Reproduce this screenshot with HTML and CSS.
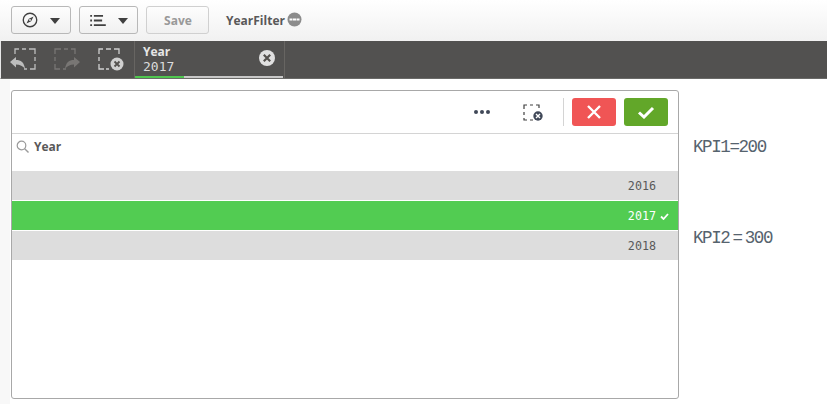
FILE: index.html
```html
<!DOCTYPE html>
<html lang="en">

<head>
    <meta charset="UTF-8">
    <title>YearFilter</title>
    <link rel="stylesheet" href="styles.css">
</head>

<body>
    <header class="toolbar">
        <button class="toolBttn navBttn">
            <svg width="16" height="16" viewBox="0 0 18 18">
                <circle cx="9" cy="9" r="7.6" fill="none" stroke="#404040" stroke-width="1.5" />
                <path d="M13 5 L10.3 10.3 L5 13 L7.7 7.7 Z M9 8 A1 1 0 1 0 9 10 A1 1 0 1 0 9 8 Z" fill="#404040" fill-rule="evenodd" />
            </svg>
            <span class="caret"></span>
        </button>
        <button class="toolBttn listBttn">
            <svg width="16" height="11" viewBox="0 0 17 12">
                <path d="M0 0h2v2H0z M0 5h2v2H0z M0 10h2v2H0z M4 0h10v2H4z M4 5h9v2H4z M4 10h13v2H4z" fill="#404040" />
            </svg>
            <span class="caret"></span>
        </button>
        <button class="toolBttn saveBttn">Save</button>
        <span class="sheetName">YearFilter</span>
        <svg class="sheetBadge" width="15" height="15" viewBox="0 0 15 15">
            <circle cx="7.5" cy="7.5" r="7" fill="#8c8c8c" />
            <path d="M2.5 6.5h3v2h-3z M6 6.5h3v2H6z M9.5 6.5h3v2h-3z" fill="#fff" />
        </svg>
    </header>

    <nav class="selectionBar">
        <div class="selTools">
            <svg class="selIcon" width="26" height="24" viewBox="0 0 26 24">
                <path d="M5 7V2h4 M12 2h4 M19 2h6v5 M25 10v4 M25 17v5h-5 M17 22h-3" fill="none" stroke="#bdbdbd" stroke-width="1.300" />
                <path d="M0 15 L6 10 V13 C11 13 14 15 15 22 C13 19 10 17.500 6 17.500 V20.500 Z" fill="#bdbdbd" />
            </svg>
            <svg class="selIcon" width="26" height="24" viewBox="0 0 26 24">
                <path d="M21 7V2h-4 M14 2h-4 M7 2H1v5 M1 10v4 M1 17v5h5 M9 22h3" fill="none" stroke="#787674" stroke-width="1.300" />
                <path d="M26 15 L20 10 V13 C15 13 12 15 11 22 C13 19 16 17.500 20 17.500 V20.500 Z" fill="#787674" />
            </svg>
            <svg class="selIcon" width="26" height="24" viewBox="0 0 26 24">
                <path d="M1 7V2h4 M8 2h5 M16 2h5v5 M1 10v4 M1 17v5h5 M8 22h3" fill="none" stroke="#d0d0d0" stroke-width="1.300" />
                <circle cx="19" cy="17" r="6.500" fill="#d0d0d0" />
                <path d="M16.500 14.500 L21.500 19.500 M21.500 14.500 L16.500 19.500" stroke="#54514e" stroke-width="1.800" />
            </svg>
        </div>
        <div class="selItem">
            <div class="selText">
                <span class="selField">Year</span>
                <span class="selValue">2017</span>
            </div>
            <svg class="selClear" width="16" height="16" viewBox="0 0 16 16">
                <circle cx="8" cy="8" r="8" fill="#e0e0e0" />
                <path d="M4.800 4.800 L11.200 11.200 M11.200 4.800 L4.800 11.200" stroke="#54514e" stroke-width="2.200" />
            </svg>
            <div class="selProgress"><span class="selProgressFill"></span></div>
        </div>
    </nav>

    <main class="content">
        <section class="listbox">
            <div class="listboxHead">
                <span class="dots"><i></i><i></i><i></i></span>
                <svg class="clearIcon" width="21" height="17" viewBox="0 0 21 17">
                    <path d="M1 5V1h3 M7 1h3 M13 1h3v3 M1 8v3 M1 14v2h3 M7 16h3" fill="none" stroke="#404040" stroke-width="1.200" />
                    <circle cx="15" cy="12" r="4.700" fill="#404858" />
                    <path d="M13 10 L17 14 M17 10 L13 14" stroke="#fff" stroke-width="1.400" />
                </svg>
                <span class="headDivider"></span>
                <button class="actionBttn cancelBttn">
                    <svg width="16" height="16" viewBox="0 0 16 16">
                        <path d="M2 2 L14 14 M14 2 L2 14" stroke="#fff" stroke-width="2.400" />
                    </svg>
                </button>
                <button class="actionBttn confirmBttn">
                    <svg width="18" height="14" viewBox="0 0 18 14">
                        <path d="M2 7.500 L7 12 L16 3" fill="none" stroke="#fff" stroke-width="3" />
                    </svg>
                </button>
            </div>
            <div class="listboxSearch">
                <svg width="13" height="13" viewBox="0 0 13 13">
                    <circle cx="5.500" cy="5.500" r="4.300" fill="none" stroke="#9a9a9a" stroke-width="1.200" />
                    <path d="M8.700 8.700 L12.500 12.500" stroke="#9a9a9a" stroke-width="1.400" />
                </svg>
                <span class="searchLabel">Year</span>
            </div>
            <ul class="yearList">
                <li class="yearRow">2016</li>
                <li class="yearRow picked">2017
                    <svg class="pickedTick" width="9" height="7" viewBox="0 0 9 7">
                        <path d="M1 3.500 L3.500 6 L8 1" fill="none" stroke="#fff" stroke-width="1.800" />
                    </svg>
                </li>
                <li class="yearRow">2018</li>
            </ul>
        </section>
        <aside class="kpis">
            <p class="kpi kpiOne">KPI1=200</p>
            <p class="kpi kpiTwo">KPI2 = 300</p>
        </aside>
    </main>
</body>

</html>
```

FILE: styles.css
```css
* {
    box-sizing: border-box;
}

body {
    margin: 0;
    height: 404px;
    overflow: hidden;
    background-color: #fff;
    font-family: "Open Sans", "Liberation Sans", sans-serif;
}

.toolbar {
    display: flex;
    align-items: center;
    height: 41px;
    padding: 0 0 1px 11px;
    background: linear-gradient(#fff, #f1f1f1);
}

.toolBttn {
    display: flex;
    align-items: center;
    height: 28px;
    padding: 0;
    background: linear-gradient(#fdfdfd, #f0f0f0);
    border: 1px solid #b8b8b8;
    border-radius: 3px;
}

.navBttn {
    width: 60px;
    padding-left: 10px;
    gap: 12px;
}

.listBttn {
    width: 59px;
    margin-left: 8px;
    padding-left: 10px;
    gap: 12px;
}

.caret {
    width: 0;
    height: 0;
    border-left: 5px solid transparent;
    border-right: 5px solid transparent;
    border-top: 6px solid #404040;
    margin-top: 2px;
}

.saveBttn {
    justify-content: center;
    width: 63px;
    margin-left: 8px;
    padding-left: 1px;
    font-family: "Open Sans", sans-serif;
    font-size: 12px;
    font-weight: 700;
    color: #999;
    border-color: #d0d0d0;
}

.sheetName {
    margin-left: 17px;
    font-size: 12px;
    font-weight: 700;
    color: #595959;
}

.sheetBadge {
    margin-left: 2px;
    margin-bottom: 2px;
}

.selectionBar {
    display: flex;
    height: 38px;
    background-color: #525150;
    border-left: 1px solid #e8e8e8;
    border-bottom: 1px solid #6a6a68;
}

.selTools {
    display: flex;
    width: 134px;
    padding: 6px 0 0 9px;
    gap: 18px;
    border-right: 1px solid #676562;
}

.selIcon {
    flex: none;
}

.selItem {
    position: relative;
    display: flex;
    justify-content: space-between;
    width: 150px;
    padding: 3px 9px 0 8px;
    border-right: 1px solid #676562;
}

.selText {
    display: flex;
    flex-direction: column;
    color: #e6e6e6;
}

.selField {
    font-size: 12px;
    font-weight: 700;
    line-height: 15px;
}

.selValue {
    font-family: "DejaVu Sans Mono", monospace;
    font-size: 13px;
    line-height: 15px;
    color: #dcdcdc;
}

.selClear {
    margin-top: 6px;
}

.selProgress {
    position: absolute;
    left: 0;
    right: 1px;
    bottom: 0;
    height: 2px;
    background-color: #c8c8c8;
}

.selProgressFill {
    display: block;
    width: 49px;
    height: 2px;
    background-color: #4fc74f;
}

.content {
    display: flex;
    align-items: flex-start;
    height: 325px;
    padding: 11px 0 0 11px;
    background: linear-gradient(90deg, #f8f8f8 10px, #fff 10px);
}

.listbox {
    width: 668px;
    height: 309px;
    background-color: #fff;
    border: 1px solid #a8a8a8;
    border-radius: 3px;
}

.listboxHead {
    display: flex;
    align-items: center;
    height: 43px;
    border-bottom: 1px solid #d4d4d4;
    padding: 0 10px 0 0;
    justify-content: flex-end;
}

.dots {
    display: flex;
    gap: 2px;
    margin-right: 33px;
}

.dots i {
    width: 4px;
    height: 4px;
    background-color: #404858;
    border-radius: 50%;
}

.clearIcon {
    margin-right: 19px;
}

.headDivider {
    width: 1px;
    height: 28px;
    margin-right: 8px;
    background-color: #d4d4d4;
}

.actionBttn {
    display: flex;
    align-items: center;
    justify-content: center;
    width: 44px;
    height: 28px;
    padding: 0;
    border: 0;
    border-radius: 3px;
}

.cancelBttn {
    background-color: #f05555;
    margin-right: 8px;
}

.confirmBttn {
    background-color: #62a729;
}

.listboxSearch {
    display: flex;
    align-items: center;
    gap: 5px;
    height: 37px;
    padding: 0 0 12px 4px;
}

.searchLabel {
    font-size: 12px;
    font-weight: 700;
    color: #595959;
}

.yearList {
    margin: 0;
    padding: 0;
    list-style: none;
}

.yearRow {
    position: relative;
    height: 29px;
    margin-bottom: 1px;
    padding-right: 22px;
    font-family: "DejaVu Sans Mono", monospace;
    font-size: 11.700px;
    line-height: 31px;
    text-align: right;
    color: #595959;
    background-color: #ddd;
}

.picked {
    color: #fff;
    background-color: #52cc52;
}

.pickedTick {
    position: absolute;
    right: 9px;
    top: 12px;
}

.kpis {
    display: flex;
    flex-direction: column;
    margin-left: 14px;
    font-family: "Liberation Mono", monospace;
    font-size: 17.500px;
    letter-spacing: -1.400px;
    word-spacing: -6px;
    color: #56636e;
}

.kpi {
    margin: 0;
    line-height: 20px;
}

.kpiOne {
    margin-top: 47px;
}

.kpiTwo {
    margin-top: 71px;
}
```
